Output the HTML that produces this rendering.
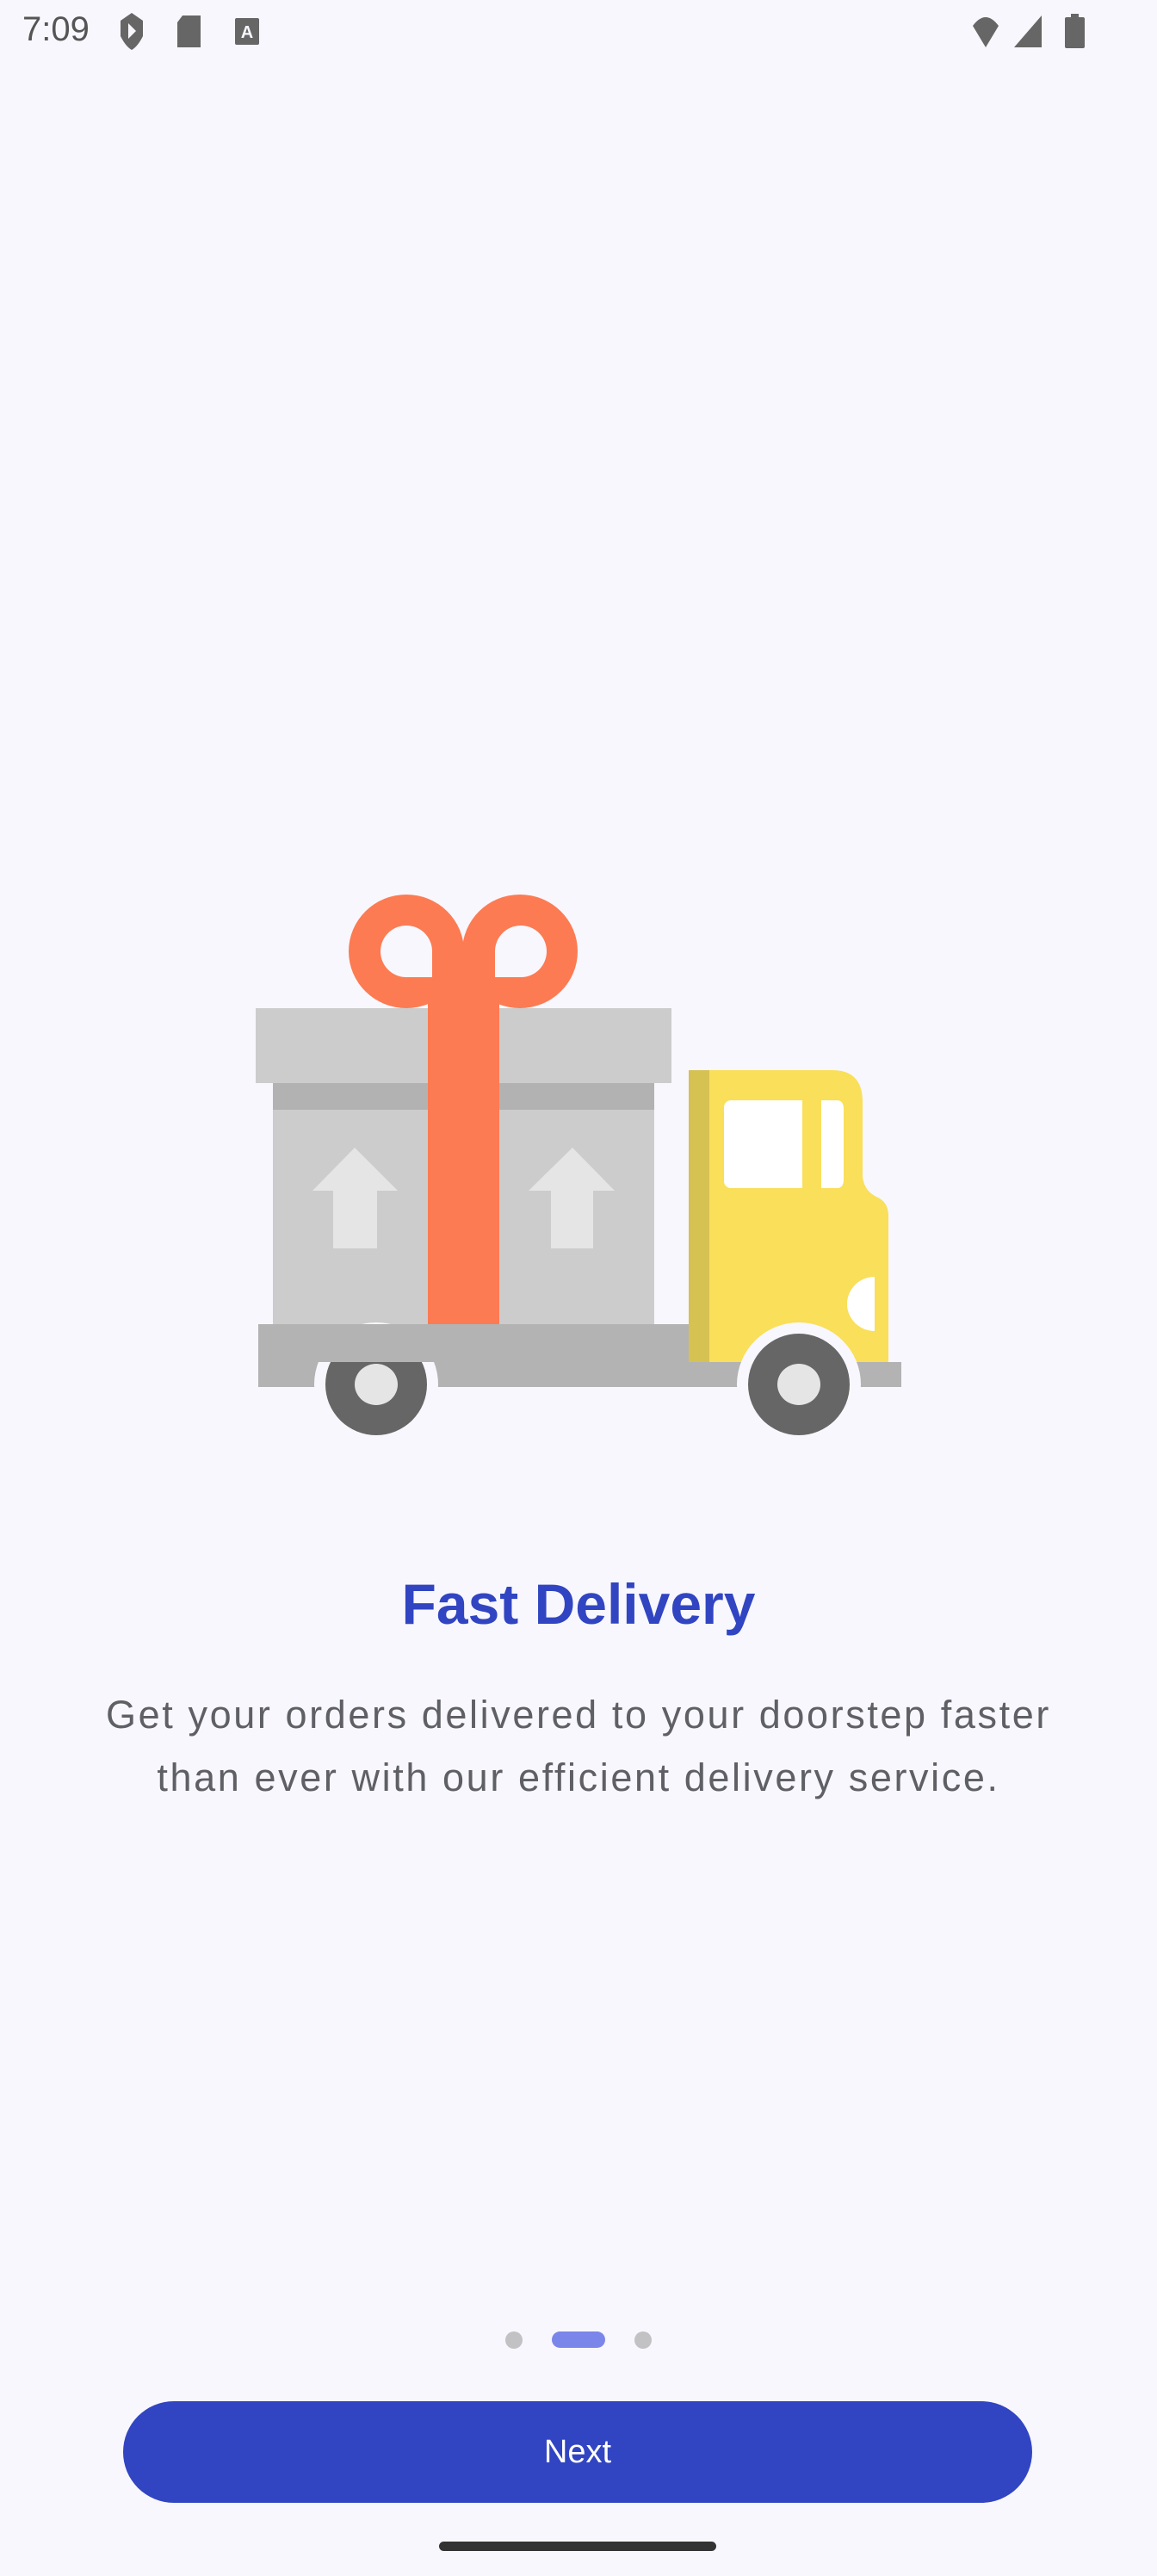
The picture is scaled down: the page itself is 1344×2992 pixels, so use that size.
<!DOCTYPE html>
<html><head><meta charset="utf-8"><style>
html,body{margin:0;padding:0}
body{width:1344px;height:2992px;background:#f8f7fd;position:relative;overflow:hidden;font-family:"Liberation Sans",sans-serif}
.t{position:absolute;left:0;width:1344px;text-align:center}
</style></head><body>
<div style="position:absolute;left:26px;top:12px;font-size:40px;color:#555;">7:09</div>
<svg style="position:absolute;left:0;top:0" width="1344" height="80">
<path d="M140 24 L153 15 L166 24 L166 42 Q160 54 153 58 Q146 54 140 42Z" fill="#666"/><path d="M149 27 L158 36 L149 45Z" fill="#f8f7fd"/>
<path d="M212 18 L233 18 L233 55 L206 55 L206 26Z" fill="#666"/>
<rect x="273" y="21" width="28" height="31" rx="2" fill="#666"/><text x="287" y="44" font-size="20" fill="#f8f7fd" text-anchor="middle" font-family="Liberation Sans" font-weight="bold">A</text>
<path d="M1130 30 Q1145 10 1160 30 L1145 55Z" fill="#666"/>
<path d="M1178 55 L1210 18 L1210 55Z" fill="#666"/>
<rect x="1237" y="20" width="23" height="36" rx="2" fill="#666"/><rect x="1244" y="16" width="9" height="5" fill="#666"/>
</svg>
<svg style="position:absolute;left:0;top:0" width="1344" height="1760">
<!-- bow -->
<ellipse cx="472" cy="1105" rx="67" ry="66" fill="#fc7b53"/>
<ellipse cx="604" cy="1105" rx="67" ry="66" fill="#fc7b53"/>
<rect x="497" y="1100" width="83" height="438" fill="#fc7b53"/>
<path d="M502 1135 L472 1135 A30 30 0 1 1 502 1105Z" fill="#f8f7fd"/>
<path d="M575 1135 L605 1135 A30 30 0 1 0 575 1105Z" fill="#f8f7fd"/>
<!-- box -->
<rect x="317" y="1258" width="180" height="280" fill="#cccccc"/>
<rect x="580" y="1258" width="180" height="280" fill="#cccccc"/>
<rect x="317" y="1258" width="180" height="31" fill="#b2b2b2"/>
<rect x="580" y="1258" width="180" height="31" fill="#b2b2b2"/>
<rect x="297" y="1171" width="200" height="87" fill="#cccccc"/>
<rect x="580" y="1171" width="200" height="87" fill="#cccccc"/>
<path d="M412 1333 L462 1383 L438 1383 L438 1450 L387 1450 L387 1383 L363 1383Z" fill="#e5e5e5"/>
<path d="M665 1333 L714 1383 L689 1383 L689 1450 L640 1450 L640 1383 L614 1383Z" fill="#e5e5e5"/>
<!-- chassis -->
<rect x="300" y="1538" width="500" height="73" fill="#b3b3b3"/>
<rect x="800" y="1582" width="247" height="29" fill="#b3b3b3"/>
<!-- cab -->
<path d="M800 1256 Q800 1243 814 1243 L967 1243 Q1002 1243 1002 1280 L1002 1367 Q1004 1384 1020 1391 Q1032 1397 1032 1412 L1032 1582 L800 1582Z" fill="#f9df5a"/>
<rect x="800" y="1243" width="24" height="339" fill="#d6c153"/>
<rect x="841" y="1278" width="91" height="102" rx="8" fill="#fff"/>
<rect x="861" y="1278" width="71" height="102" fill="#fff"/>
<path d="M954 1278 L972 1278 Q980 1278 980 1288 L980 1370 Q980 1380 972 1380 L954 1380Z" fill="#fff"/>
<path d="M1016 1483 A32 31.5 0 0 0 1016 1546Z" fill="#fff"/>
<!-- wheels -->
<ellipse cx="437" cy="1608" rx="72" ry="72" fill="#f8f7fd"/>
<ellipse cx="928" cy="1608" rx="72" ry="72" fill="#f8f7fd"/>
<ellipse cx="437" cy="1608" rx="59" ry="59" fill="#666"/>
<ellipse cx="437" cy="1608" rx="25" ry="24" fill="#e5e5e5"/>
<rect x="300" y="1538" width="500" height="44" fill="#b3b3b3"/>
<ellipse cx="928" cy="1608" rx="59" ry="59" fill="#666"/>
<ellipse cx="928" cy="1608" rx="25" ry="24" fill="#e5e5e5"/>
</svg>
<div class="t" style="top:1825px;font-size:66px;font-weight:bold;color:#3145c2;">Fast Delivery</div>
<div class="t" style="top:1955px;font-size:45px;line-height:73px;letter-spacing:2.6px;color:#5f5f66;">Get your orders delivered to your doorstep faster<br>than ever with our efficient delivery service.</div>
<div style="position:absolute;left:587px;top:2708px;width:20px;height:20px;border-radius:50%;background:#c2c2c4"></div>
<div style="position:absolute;left:641px;top:2708px;width:62px;height:19px;border-radius:10px;background:#7a86e9"></div>
<div style="position:absolute;left:737px;top:2708px;width:20px;height:20px;border-radius:50%;background:#c2c2c4"></div>
<div style="position:absolute;left:143px;top:2789px;width:1056px;height:118px;border-radius:59px;background:#3145c2;color:#fff;font-size:38px;text-align:center;line-height:118px;">Next</div>
<div style="position:absolute;left:510px;top:2952px;width:322px;height:11px;border-radius:6px;background:#333"></div>
</body></html>
